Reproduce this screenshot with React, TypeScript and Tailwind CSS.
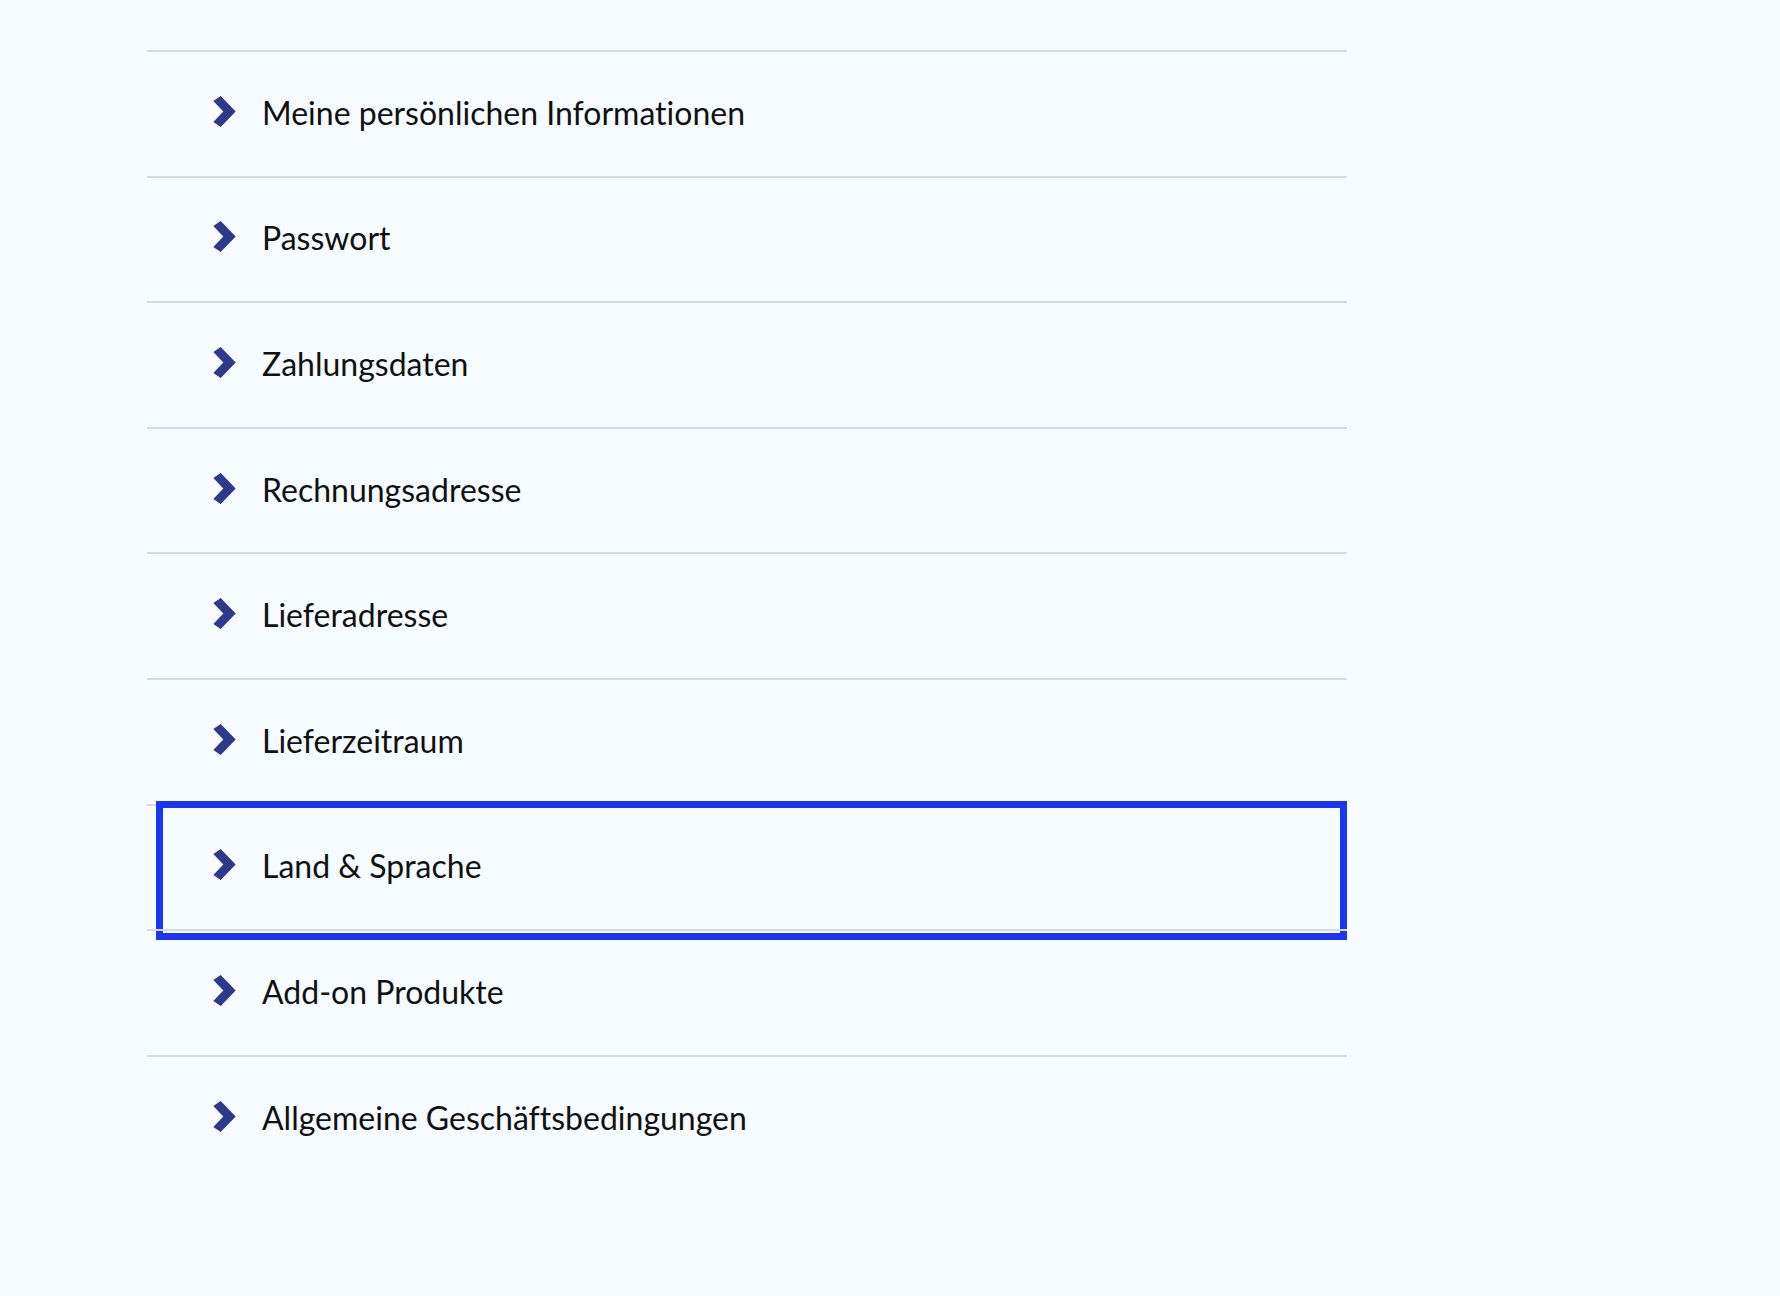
import React from 'react';

const items = [
  'Meine persönlichen Informationen',
  'Passwort',
  'Zahlungsdaten',
  'Rechnungsadresse',
  'Lieferadresse',
  'Lieferzeitraum',
  'Land & Sprache',
  'Add-on Produkte',
  'Allgemeine Geschäftsbedingungen',
];

const Chevron = () => (
  <svg width="23" height="31" viewBox="0 0 23 31" className="shrink-0 mb-[3px]">
    <polygon points="7.7,0 22.7,15.5 7.7,31 0.3,26 10.3,15.5 0.3,5" fill="#2d3a8c" />
  </svg>
);

export default function App() {
  return (
    <div className="min-h-screen bg-[#f5fbff] pt-[50px] pl-[147px] font-['Lato',sans-serif] [font-variant-ligatures:none]">
      <ul className="w-[1200px]">
        {items.map((label, i) => (
          <li key={label} className="relative h-[125.6px] border-t-2 border-[#d8dce1]">
            <button className="w-full h-full flex items-center gap-[26px] pl-[66px] pb-[2px] text-left text-[32px] text-[#111111]">
              <Chevron />
              <span>{label}</span>
            </button>
            {i === 6 && (
              <div className="pointer-events-none absolute -top-[5px] left-[9px] right-0 -bottom-[11px] border-[7px] border-[#1b35f2]" />
            )}
          </li>
        ))}
      </ul>
    </div>
  );
}
